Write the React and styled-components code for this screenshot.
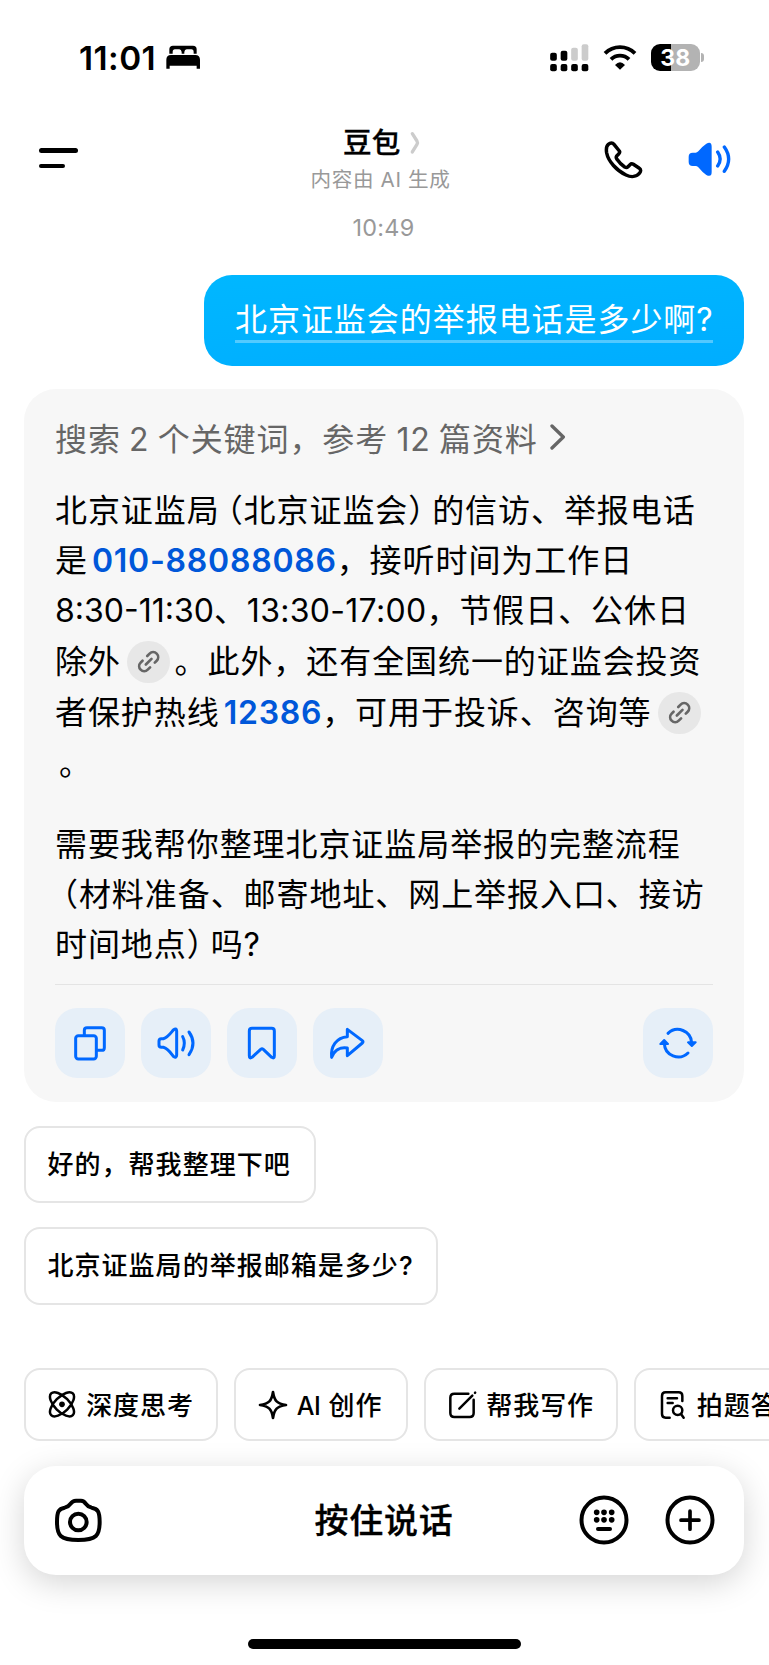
import React from "react";
import styled, { createGlobalStyle } from "styled-components";

const Global = createGlobalStyle`
  * { box-sizing: border-box; }
  body { margin: 0; background: #fff; }
  button { font: inherit; border: 0; padding: 0; background: none; color: inherit; }
  svg { display: block; flex: none; }
`;

const Screen = styled.div`
  width: 769px;
  height: 1665px;
  overflow: hidden;
  display: flex;
  flex-direction: column;
  background: #fff;
  color: #000;
  font-family: "Inter", "Noto Sans CJK SC", sans-serif;
  white-space: nowrap;
`;

/* Icon paths are authored on a 3x grid and drawn at a third of that size. */
const Svg = styled.svg`
  fill: ${(p) => (p.$solid ? "currentColor" : "none")};
  stroke: ${(p) => (p.$solid ? "none" : "currentColor")};
  stroke-linecap: round;
  stroke-linejoin: round;
`;
function Icon({ box, weight = 9, solid, children }) {
  const [, , w, h] = box;
  return (
    <Svg $solid={solid} viewBox={box.join(" ")} width={w / 3} height={h / 3} strokeWidth={weight} aria-hidden="true">
      {children}
    </Svg>
  );
}

const StatusBar = styled.div`
  flex: none;
  height: 115px;
  padding: 0 65px 0 79px;
  display: flex;
  align-items: center;
  justify-content: space-between;
`;
const StatusGroup = styled.div`
  display: flex;
  align-items: center;
  gap: ${(p) => p.$gap}px;
`;
const Clock = styled.span`
  font-size: 33.3px;
  font-weight: 600;
  line-height: 40px;
  letter-spacing: 0.45px;
`;
const BatteryWrap = styled.div`
  display: flex;
  align-items: center;
  gap: 1px;
`;
const Battery = styled.div`
  width: 49.5px;
  height: 27.5px;
  border-radius: 9px;
  background: linear-gradient(to right, #000 20px, #b3b3b3 20px);
  color: #fff;
  font-size: 23px;
  font-weight: 700;
  line-height: 28px;
  text-align: center;
`;
const BatteryNub = styled.div`
  width: 3px;
  height: 9px;
  border-radius: 0 4px 4px 0;
  background: #b3b3b3;
`;

const Header = styled.header`
  flex: none;
  height: 90px;
  padding: 0 38px 0 39px;
  display: grid;
  grid-template-columns: 150px 1fr 150px;
`;
const MenuButton = styled.button`
  align-self: start;
  margin-top: 33.3px;
  display: flex;
  flex-direction: column;
  gap: 11.5px;
`;
const MenuLine = styled.span`
  width: ${(p) => p.$w}px;
  height: 4.3px;
  border-radius: 3px;
  background: #000;
`;
const Titles = styled.div`
  display: flex;
  flex-direction: column;
  align-items: center;
`;
const TitleRow = styled.div`
  display: flex;
  align-items: center;
  gap: 10px;
  height: 40px;
  margin-top: 8px;
  padding-right: 9px;
  color: #ccc;
`;
const Title = styled.h1`
  margin: 0;
  padding-left: 3px;
  color: #000;
  font-size: 28.6px;
  font-weight: 500;
  line-height: 40px;
  -webkit-text-stroke: 0.3px #000;
`;
const Subtitle = styled.div`
  margin-top: 1.5px;
  font-size: 20.6px;
  line-height: 30px;
  letter-spacing: 0.65px;
  color: #999;
  padding-right: 9px;
`;
const HeaderActions = styled.div`
  display: flex;
  align-items: flex-start;
  justify-content: flex-end;
  gap: 45px;
  padding-top: 24.5px;
`;
const Blue = styled.span`
  color: #0068ff;
`;

const TimeStamp = styled.div`
  flex: none;
  height: 70px;
  padding: 8px 2px 0 0;
  text-align: center;
  font-size: 23.4px;
  letter-spacing: 0.25px;
  line-height: 30px;
  color: #999;
`;

const UserBubble = styled.div`
  flex: none;
  align-self: flex-end;
  width: 540px;
  height: 90.5px;
  margin: 0 25px 23.5px 0;
  padding: 23px 0 0 31px;
  border-radius: 28px;
  background: linear-gradient(175deg, #00b7ff, #00adff);
  color: #fff;
`;
const UserText = styled.span`
  display: inline-block;
  height: 45px;
  width: 478px;
  border-bottom: 3px solid rgba(255, 255, 255, 0.32);
  font-size: 32px;
  line-height: 44px;
  letter-spacing: 0.95px;
`;

const AnswerCard = styled.section`
  flex: none;
  width: 720px;
  height: 713px;
  margin-left: 24px;
  padding: 23px 31px 0;
  border-radius: 32px;
  background: #f7f7f7;
`;
const SearchSummary = styled.button`
  display: flex;
  align-items: center;
  gap: 12px;
  height: 50px;
  color: #666;
  font-size: 32px;
  letter-spacing: 0.9px;
  word-spacing: -1.6px;
`;
const Paragraph = styled.div`
  margin-top: ${(p) => p.$top}px;
`;
const Line = styled.div`
  display: flex;
  align-items: center;
  height: ${(p) => p.$h || 50}px;
  padding-left: ${(p) => p.$indent || 0}px;
  font-size: 32px;
  line-height: 50px;
  letter-spacing: 0.93px;
`;
const OpenParen = styled.span`
  margin-left: 7px;
  font-feature-settings: "halt";
`;
const CloseParen = styled.span`
  margin-right: 7px;
  font-feature-settings: "halt";
`;
const Phone = styled.span`
  margin: 0 0 0 4px;
  color: #0057d9;
  font-weight: 600;
  letter-spacing: 0.75px;
`;
const Digits = styled.span`
  letter-spacing: ${(p) => p.$track || 0}px;
`;
const SourceBadge = styled.button`
  display: flex;
  align-items: center;
  justify-content: center;
  flex: none;
  width: 42.7px;
  height: 42.7px;
  margin: 0 4.5px 0 6.5px;
  border-radius: 50%;
  background: #e7e7e7;
  color: #666;
`;

const ActionRow = styled.div`
  display: flex;
  gap: 16px;
  margin-top: 14.5px;
  padding-top: 23px;
  border-top: 1px solid #e4e4e4;
`;
const ActionButton = styled.button`
  display: flex;
  align-items: center;
  justify-content: center;
  width: 70px;
  height: 70px;
  margin-left: ${(p) => (p.$end ? "auto" : 0)};
  border-radius: 22px;
  background: #e6eff8;
  color: #0068ff;
`;

const Suggestions = styled.div`
  flex: none;
  display: flex;
  flex-direction: column;
  align-items: flex-start;
  gap: 24px;
  height: 242.5px;
  padding: 0 24px;
  margin-top: 23.7px;
`;
const Suggestion = styled.button`
  width: ${(p) => p.$w}px;
  height: 77.5px;
  padding: 0 0 4px 21.5px;
  border: 2px solid #e5e5e5;
  border-radius: 16px;
  text-align: left;
  font-size: 26px;
  font-weight: 500;
  letter-spacing: 1.03px;
`;

const Tools = styled.nav`
  flex: none;
  display: flex;
  gap: 16.3px;
  height: 73px;
  padding-left: 24px;
  overflow: hidden;
`;
const Tool = styled.button`
  flex: none;
  display: flex;
  align-items: center;
  width: ${(p) => p.$w}px;
  padding-left: ${(p) => p.$left || 22}px;
  gap: ${(p) => p.$gap}px;
  border: 2px solid #e5e5e5;
  border-radius: 16px;
  font-size: 26px;
  font-weight: 500;
  letter-spacing: 0.95px;
`;
const ToolLabel = styled.span`
  padding-bottom: 2px;
`;
const Latin = styled.span`
  font-size: 25px;
  letter-spacing: -0.4px;
`;

const InputBar = styled.div`
  flex: none;
  display: grid;
  grid-template-columns: 160px 1fr 160px;
  align-items: center;
  width: 720px;
  height: 109.3px;
  margin: 24.4px 0 0 24px;
  padding: 0 29.5px;
  border-radius: 32px;
  background: #fff;
  box-shadow: 0 8px 32px rgba(0, 0, 0, 0.17);
`;
const HoldToTalk = styled.div`
  padding-bottom: 4px;
  text-align: center;
  font-size: 34px;
  font-weight: 500;
  letter-spacing: 0.7px;
  -webkit-text-stroke: 0.3px #000;
`;
const InputActions = styled.div`
  display: flex;
  justify-content: flex-end;
  gap: 36px;
`;
const HomeIndicator = styled.div`
  flex: none;
  width: 273.5px;
  height: 10px;
  margin: 64px 0 0 247.5px;
  border-radius: 5px;
  background: #000;
`;

/* Two chain halves facing each other along a diagonal, joined by a bar. */
const LinkIcon = () => (
  <Icon box={[406, 803, 76, 76]} weight={8}>
    <g transform="rotate(-45 444 841)">
      <path d="M435 856H425A15 15 0 0 1 425 826H433M453 826H463A15 15 0 0 1 463 856H455M432 841H456" />
    </g>
  </Icon>
);

export default function App() {
  return (
    <Screen>
      <Global />
      <StatusBar>
        <StatusGroup $gap={10}>
          <Clock>11:01</Clock>
          <Icon box={[494, 77, 104, 74]} solid>
            <path d="M504 103V90Q504 79 515 79H575Q586 79 586 90V103H577V98Q577 90 570 90H556Q550 90 549 98V103H541V98Q540 90 534 90H521Q514 90 514 98V103Z" />
            <path d="M495 148V121Q495 107 509 107H582Q596 107 596 121V148H586V139H505V148Z" />
          </Icon>
        </StatusGroup>
        <StatusGroup $gap={14}>
          <Icon box={[500, 70, 116, 84]} solid>
            <rect x="500.500" y="96" width="20" height="24" rx="6" />
            <rect x="532" y="90" width="20" height="30" rx="6" />
            <rect x="563.500" y="81" width="20" height="39" rx="6" fill="#ccc" />
            <rect x="595" y="71" width="20" height="49" rx="6" fill="#ccc" />
            <rect x="500.500" y="130" width="20" height="22" rx="6" />
            <rect x="532" y="130" width="20" height="22" rx="6" />
            <rect x="563.500" y="130" width="20" height="22" rx="6" />
            <rect x="595" y="130" width="20" height="22" rx="6" />
          </Icon>
          <Icon box={[656, 70, 102, 84]} solid>
            <path d="M662 98A64 64 0 0 1 752 98M680 116A38 38 0 0 1 734 116" fill="none" stroke="currentColor" strokeWidth="11.500" strokeLinecap="butt" />
            <path d="M707 147L692 133Q707 117 722 133Z" />
          </Icon>
          <BatteryWrap>
            <Battery>38</Battery>
            <BatteryNub />
          </BatteryWrap>
        </StatusGroup>
      </StatusBar>

      <Header>
        <MenuButton aria-label="菜单">
          <MenuLine $w={39} />
          <MenuLine $w={25.5} />
        </MenuButton>
        <Titles>
          <TitleRow>
            <Title>豆包</Title>
            <Icon box={[76, 332, 32, 70]} weight={10}>
              <path d="M83 340L97 362Q100 367 97 372L83 395" />
            </Icon>
          </TitleRow>
          <Subtitle>内容由 AI 生成</Subtitle>
        </Titles>
        <HeaderActions>
          <Icon box={[659, 358, 117, 118]} weight={10.5}>
            <path d="M672 371C678 366 685 366 689 371L705 391C707 394 706 397 703 400L697 406C695 409 695 412 698 416C704 425 712 433 721 439C725 441 728 441 731 438L737 432C740 429 744 429 747 431L765 443C770 446 770 452 766 457C757 469 740 470 725 463C697 450 672 422 667 397C665 385 666 376 672 371Z" />
          </Icon>
          <Blue>
            <Icon box={[911, 358, 130, 118]} weight={10}>
              <path fill="currentColor" stroke="none" d="M925 396H934Q938 396 942 392Q955 376 966 369Q982 361 982 378V454Q982 471 966 463Q955 456 942 440Q938 436 934 436H925Q913 436 913 424V408Q913 396 925 396Z" />
              <path d="M1000 394Q1015 415 1000 436M1020 379Q1046 415 1020 452" />
            </Icon>
          </Blue>
        </HeaderActions>
      </Header>

      <TimeStamp>10:49</TimeStamp>

      <UserBubble>
        <UserText>北京证监会的举报电话是多少啊?</UserText>
      </UserBubble>

      <AnswerCard>
        <SearchSummary>
          搜索 2 个关键词，参考 12 篇资料
          <Icon box={[0, 0, 48, 78]} weight={10}>
            <path d="M6 6L40 39L6 72" />
          </Icon>
        </SearchSummary>

        <Paragraph $top={24}>
          <Line>
            北京证监局<OpenParen>（</OpenParen>北京证监会<CloseParen>）</CloseParen>的信访、举报电话
          </Line>
          <Line>
            是<Phone>010-88088086</Phone>，接听时间为工作日
          </Line>
          <Line>
            <Digits>8:30-11:30</Digits>、<Digits $track={0.3}>13:30-17:00</Digits>，节假日、公休日
          </Line>
          <Line $h={52}>
            除外
            <SourceBadge aria-label="来源"><LinkIcon /></SourceBadge>
            。此外，还有全国统一的证监会投资
          </Line>
          <Line>
            者保护热线<Phone>12386</Phone>，可用于投诉、咨询等
            <SourceBadge aria-label="来源"><LinkIcon /></SourceBadge>
          </Line>
          <Line $h={51} $indent={4}>。</Line>
        </Paragraph>

        <Paragraph $top={31}>
          <Line>需要我帮你整理北京证监局举报的完整流程</Line>
          <Line>
            <OpenParen>（</OpenParen>材料准备、邮寄地址、网上举报入口、接访
          </Line>
          <Line $h={49}>
            时间地点<CloseParen>）</CloseParen>吗?
          </Line>
        </Paragraph>

        <ActionRow>
          <ActionButton aria-label="复制">
            <Icon box={[165, 595, 210, 210]}>
              <rect x="227" y="678" width="62" height="70" rx="8" />
              <path d="M253 676V662Q253 654 261 654H305Q313 654 313 662V714Q313 722 305 722H291" />
            </Icon>
          </ActionButton>
          <ActionButton aria-label="朗读">
            <Icon box={[423, 595, 210, 210]}>
              <path d="M484 687H490C503 684 511 672 520 661Q530 653 530 664V736Q530 747 520 740C511 728 503 716 490 713H484Q477 713 477 706V694Q477 687 484 687Z" />
              <path d="M548 681Q558 700 548 721M567 667Q591 700 567 735" />
            </Icon>
          </ActionButton>
          <ActionButton aria-label="收藏">
            <Icon box={[681, 595, 210, 210]}>
              <path d="M748 664Q748 656 756 656H815Q823 656 823 664V738Q823 748 815 743L790 719Q786 716 782 719L756 743Q748 748 748 738Z" />
            </Icon>
          </ActionButton>
          <ActionButton aria-label="分享">
            <Icon box={[939, 595, 210, 210]}>
              <path d="M1042 659L1087 693Q1091 696 1087 700L1042 738V715C1020 711 1003 722 995 743C991 710 1010 683 1042 681Z" />
            </Icon>
          </ActionButton>
          <ActionButton $end aria-label="重新生成">
            <Icon box={[822, 595, 210, 210]}>
              <path d="M897 671A42 42 0 0 1 968 700M957 730A42 42 0 0 1 886 701" />
              <path fill="currentColor" strokeWidth="6" d="M957 698H980L968.500 709ZM874 703H897L885.500 691Z" />
            </Icon>
          </ActionButton>
        </ActionRow>
      </AnswerCard>

      <Suggestions>
        <Suggestion $w={292}>好的，帮我整理下吧</Suggestion>
        <Suggestion $w={413.5}>北京证监局的举报邮箱是多少?</Suggestion>
      </Suggestions>

      <Tools>
        <Tool $w={194} $gap={9.5}>
          <Icon box={[146, 122, 86, 86]} weight={7.5}>
            <ellipse cx="188" cy="165" rx="46" ry="22" transform="rotate(45 188 165)" />
            <ellipse cx="188" cy="165" rx="46" ry="22" transform="rotate(-45 188 165)" />
            <circle cx="188" cy="165" r="8.500" fill="currentColor" stroke="none" />
          </Icon>
          <ToolLabel>深度思考</ToolLabel>
        </Tool>
        <Tool $w={173.5} $gap={8.5}>
          <Icon box={[774, 120, 90, 90]} weight={8}>
            <path d="M819 126C823 153 831 161 858 165C831 169 823 177 819 204C815 177 807 169 780 165C807 161 815 153 819 126Z" />
          </Icon>
          <ToolLabel><Latin>AI</Latin> 创作</ToolLabel>
        </Tool>
        <Tool $w={194} $gap={9.5}>
          <Icon box={[238, 120, 86, 90]} weight={7.5}>
            <path d="M299 131H257Q245 131 245 143V189Q245 201 257 201H303Q315 201 315 189V149M272 176L311 137M319 128.500L319.500 128" />
          </Icon>
          <ToolLabel>帮我写作</ToolLabel>
        </Tool>
        <Tool $w={220} $gap={11} $left={24}>
          <Icon box={[875, 120, 76, 90]} weight={7.5}>
            <path d="M942 153V138Q942 127 931 127H892Q881 127 881 138V192Q881 203 892 203H904M898 145H926M898 159H913M938 192L946 203" />
            <circle cx="928" cy="181" r="14" />
          </Icon>
          <ToolLabel>拍题答疑</ToolLabel>
        </Tool>
      </Tools>

      <InputBar>
        <Icon box={[162, 440, 146, 140]} weight={12}>
          <path d="M212 460Q218 451 228 451H243Q252 451 257 460Q263 469 275 472C293 475 299 483 299 515C299 555 290 569 235 569C180 569 171 555 171 515C171 483 176 475 194 472Q206 469 212 460Z" />
          <circle cx="235" cy="515" r="25" />
        </Icon>
        <HoldToTalk>按住说话</HoldToTalk>
        <InputActions>
          <Icon box={[629, 435, 150, 150]} weight={12}>
            <circle cx="704" cy="510" r="67.500" />
            <path d="M686 537H722" strokeWidth="12" />
            <path d="M682 487h.1M704 487h.1M727 487h.1M682 509.500h.1M704 509.500h.1M727 509.500h.1" strokeWidth="17" />
          </Icon>
          <Icon box={[887, 435, 150, 150]} weight={12}>
            <circle cx="962" cy="510" r="67.500" />
            <path d="M935 510.500H989M962 483.500V537.500" strokeWidth="11" />
          </Icon>
        </InputActions>
      </InputBar>
      <HomeIndicator />
    </Screen>
  );
}
